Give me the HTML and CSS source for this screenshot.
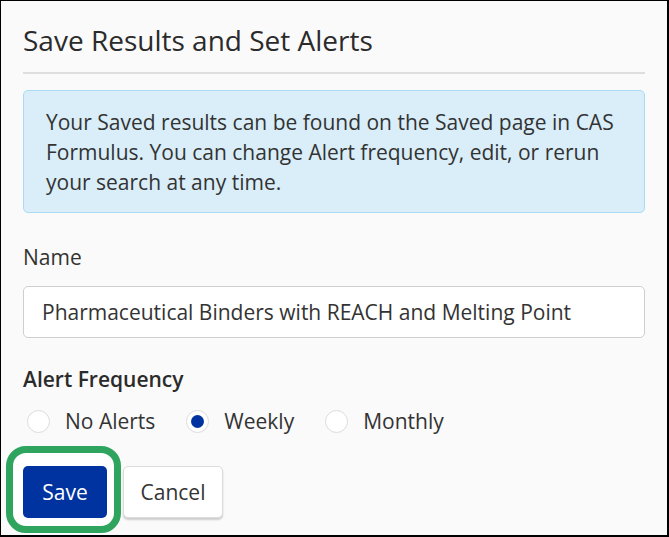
FILE: index.html
```html
<!DOCTYPE html>
<html>
<head>
<meta charset="utf-8">
<link rel="stylesheet" href="styles.css">
</head>
<body>
<div class="dialog">
  <h1 class="title">Save Results and Set Alerts</h1>
  <div class="divider"></div>
  <div class="info">Your Saved results can be found on the Saved page in CAS Formulus. You can change Alert frequency, edit, or rerun your search at any time.</div>
  <div class="label name-label">Name</div>
  <div class="input">Pharmaceutical Binders with REACH and Melting Point</div>
  <div class="label freq-label">Alert Frequency</div>
  <div class="radios">
    <div class="radio"><span class="circle"></span><span>No Alerts</span></div>
    <div class="radio"><span class="circle checked"></span><span>Weekly</span></div>
    <div class="radio"><span class="circle"></span><span>Monthly</span></div>
  </div>
  <div class="actions">
    <div class="highlight"><button class="btn primary">Save</button></div>
    <button class="btn secondary">Cancel</button>
  </div>
</div>
</body>
</html>
```
FILE: styles.css
```css
html, body {
  margin: 0;
  padding: 0;
  width: 669px;
  height: 537px;
  overflow: hidden;
  background: #fafafa;
}
.dialog {
  box-sizing: border-box;
  width: 669px;
  height: 537px;
  border-top: 1px solid #000;
  border-left: 1px solid #000;
  border-right: 2px solid #000;
  border-bottom: 2px solid #000;
  background: #fafafa;
  padding: 0 22px 0 22px;
  font-family: "Open Sans", "Noto Sans", sans-serif;
  color: #333;
  display: flex;
  flex-direction: column;
}
.dialog > * {
  flex-shrink: 0;
}
.title {
  margin: 20px 0 0;
  font-size: 28px;
  font-weight: 400;
  line-height: 38px;
  color: #2b2b2b;
}
.divider {
  margin-top: 13px;
  height: 2px;
  background: #dedede;
}
.info {
  margin-top: 16px;
  background: #d9eef9;
  border: 1px solid #a9dbf3;
  border-radius: 5px;
  padding: 16px 22px 15px 22px;
  font-size: 21px;
  line-height: 30px;
  color: #333;
}
.label {
  font-size: 21px;
  line-height: 28px;
  color: #333;
}
.name-label {
  margin-top: 30px;
}
.input {
  margin-top: 15px;
  height: 52px;
  box-sizing: border-box;
  border: 1px solid #cfcfcf;
  border-radius: 5px;
  background: #fff;
  padding: 0 18px;
  font-size: 21px;
  line-height: 50px;
  color: #333;
}
.freq-label {
  margin-top: 27px;
  font-weight: 600;
  color: #2b2b2b;
}
.radios {
  margin-top: 14px;
  display: flex;
  gap: 31px;
  padding-left: 4px;
}
.radio {
  display: flex;
  align-items: center;
  gap: 15px;
  font-size: 21px;
  line-height: 28px;
  color: #333;
}
.circle {
  box-sizing: border-box;
  width: 23px;
  height: 23px;
  border-radius: 50%;
  border: 1px solid #dcdcdc;
  background: #fff;
  display: flex;
  align-items: center;
  justify-content: center;
}
.circle.checked::after {
  content: "";
  width: 13px;
  height: 13px;
  border-radius: 50%;
  background: #0033a0;
}
.actions {
  margin-top: 11px;
  margin-left: -17px;
  display: flex;
  align-items: flex-start;
  gap: 2px;
}
.highlight {
  border: 7px solid #2ea45f;
  border-radius: 20px;
  padding: 13px 7px 8px 10px;
  background: #fff;
}
.btn {
  font-family: "Open Sans", "Noto Sans", sans-serif;
  font-size: 21px;
  height: 52px;
  border-radius: 5px;
  cursor: pointer;
  display: block;
}
.primary {
  width: 84px;
  background: #0033a0;
  color: #fff;
  border: none;
}
.secondary {
  margin-top: 20px;
  width: 100px;
  background: #fff;
  color: #333;
  border: 1px solid #dcdcdc;
  box-shadow: 0 2px 2px rgba(0,0,0,0.18);
}
```
